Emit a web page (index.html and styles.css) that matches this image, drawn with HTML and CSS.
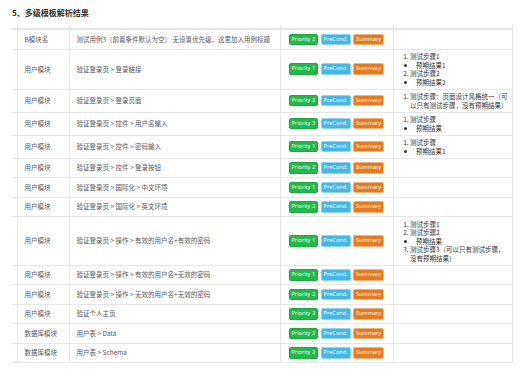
FILE: index.html
```html
<!DOCTYPE html>
<html lang="zh-CN">
<head>
  <meta charset="UTF-8">
  <title>多级模板解析结果</title>
  <link rel="stylesheet" href="styles.css">
</head>
<body>
  <div class="page">
    <h3 class="title">5、多级模板解析结果</h3>
    <table class="result">
      <colgroup>
        <col class="c-gap">
        <col class="c-module">
        <col class="c-case">
        <col class="c-tags">
        <col class="c-steps">
      </colgroup>
      <tr class="cut"><td></td><td></td><td></td><td></td><td></td></tr>
      <tr>
        <td></td>
        <td>B模块名</td>
        <td>测试用例3（前置条件默认为空） 无设置优先级，这里加入用例标题</td>
        <td><div class="tags"><span class="badge p">Priority 2</span><span class="badge c">PreCond.</span><span class="badge s">Summary</span></div></td>
        <td></td>
      </tr>
      <tr>
        <td></td>
        <td>用户模块</td>
        <td>验证登录页 &gt; 登录链接</td>
        <td><div class="tags"><span class="badge p">Priority 1</span><span class="badge c">PreCond.</span><span class="badge s">Summary</span></div></td>
        <td class="steps">
          <ol>
            <li>测试步骤1<ul><li>预期结果1</li></ul></li>
            <li>测试步骤2<ul><li>预期结果2</li></ul></li>
          </ol>
        </td>
      </tr>
      <tr>
        <td></td>
        <td>用户模块</td>
        <td>验证登录页 &gt; 登录页面</td>
        <td><div class="tags"><span class="badge p">Priority 2</span><span class="badge c">PreCond.</span><span class="badge s">Summary</span></div></td>
        <td class="steps">
          <ol>
            <li>测试步骤：页面设计风格统一（可以只有测试步骤，没有预期结果）</li>
          </ol>
        </td>
      </tr>
      <tr>
        <td></td>
        <td>用户模块</td>
        <td>验证登录页 &gt; 控件 &gt; 用户名输入</td>
        <td><div class="tags"><span class="badge p">Priority 3</span><span class="badge c">PreCond.</span><span class="badge s">Summary</span></div></td>
        <td class="steps">
          <ol>
            <li>测试步骤<ul><li>预期结果</li></ul></li>
          </ol>
        </td>
      </tr>
      <tr>
        <td></td>
        <td>用户模块</td>
        <td>验证登录页 &gt; 控件 &gt; 密码输入</td>
        <td><div class="tags"><span class="badge p">Priority 1</span><span class="badge c">PreCond.</span><span class="badge s">Summary</span></div></td>
        <td class="steps">
          <ol>
            <li>测试步骤<ul><li>预期结果1</li></ul></li>
          </ol>
        </td>
      </tr>
      <tr>
        <td></td>
        <td>用户模块</td>
        <td>验证登录页 &gt; 控件 &gt; 登录按钮</td>
        <td><div class="tags"><span class="badge p">Priority 2</span><span class="badge c">PreCond.</span><span class="badge s">Summary</span></div></td>
        <td></td>
      </tr>
      <tr>
        <td></td>
        <td>用户模块</td>
        <td>验证登录页 &gt; 国际化 &gt; 中文环境</td>
        <td><div class="tags"><span class="badge p">Priority 1</span><span class="badge c">PreCond.</span><span class="badge s">Summary</span></div></td>
        <td></td>
      </tr>
      <tr>
        <td></td>
        <td>用户模块</td>
        <td>验证登录页 &gt; 国际化 &gt; 英文环境</td>
        <td><div class="tags"><span class="badge p">Priority 2</span><span class="badge c">PreCond.</span><span class="badge s">Summary</span></div></td>
        <td></td>
      </tr>
      <tr>
        <td></td>
        <td>用户模块</td>
        <td>验证登录页 &gt; 操作 &gt; 有效的用户名+有效的密码</td>
        <td><div class="tags"><span class="badge p">Priority 1</span><span class="badge c">PreCond.</span><span class="badge s">Summary</span></div></td>
        <td class="steps">
          <ol>
            <li>测试步骤1</li>
            <li>测试步骤2<ul><li>预期结果</li></ul></li>
            <li>测试步骤3（可以只有测试步骤，没有预期结果）</li>
          </ol>
        </td>
      </tr>
      <tr>
        <td></td>
        <td>用户模块</td>
        <td>验证登录页 &gt; 操作 &gt; 有效的用户名+无效的密码</td>
        <td><div class="tags"><span class="badge p">Priority 1</span><span class="badge c">PreCond.</span><span class="badge s">Summary</span></div></td>
        <td></td>
      </tr>
      <tr>
        <td></td>
        <td>用户模块</td>
        <td>验证登录页 &gt; 操作 &gt; 无效的用户名+无效的密码</td>
        <td><div class="tags"><span class="badge p">Priority 2</span><span class="badge c">PreCond.</span><span class="badge s">Summary</span></div></td>
        <td></td>
      </tr>
      <tr>
        <td></td>
        <td>用户模块</td>
        <td>验证个人主页</td>
        <td><div class="tags"><span class="badge p">Priority 2</span><span class="badge c">PreCond.</span><span class="badge s">Summary</span></div></td>
        <td></td>
      </tr>
      <tr>
        <td></td>
        <td>数据库模块</td>
        <td>用户表 &gt; Data</td>
        <td><div class="tags"><span class="badge p">Priority 2</span><span class="badge c">PreCond.</span><span class="badge s">Summary</span></div></td>
        <td></td>
      </tr>
      <tr>
        <td></td>
        <td>数据库模块</td>
        <td>用户表 &gt; Schema</td>
        <td><div class="tags"><span class="badge p">Priority 2</span><span class="badge c">PreCond.</span><span class="badge s">Summary</span></div></td>
        <td></td>
      </tr>
    </table>
  </div>
</body>
</html>
```

FILE: styles.css
```css
body {
  margin: 0;
  background-color: #fff;
  font-family: "Noto Sans CJK SC", "Noto Sans", sans-serif;
  color: #555;
}
.page {
  padding: 8px 12px;
}
.title {
  margin: 0;
  font-size: 8px;
  line-height: 10px;
  font-weight: bold;
  color: #333;
}
.result {
  margin-top: 7px;
  width: 500px;
  table-layout: fixed;
  border-collapse: collapse;
  font-size: 6.5px;
  line-height: 9px;
}
.c-gap { width: 5px; }
.c-module { width: 52px; }
.c-case { width: 211px; }
.c-tags { width: 113px; }
.c-steps { width: 119px; }

.result td {
  border: 1px solid #e6e6e6;
  padding: 3.5px 7px;
  vertical-align: middle;
  white-space: nowrap;
  overflow: hidden;
}
.result td:first-child {
  border-left: none;
  padding: 0;
}
.result tr.cut td {
  height: 3px;
  padding: 0;
  border-top: none;
  border-bottom: 2px solid #e6e6e6;
}
.tags {
  display: flex;
  gap: 2.5px;
  padding-left: 1px;
}
.badge {
  display: inline-block;
  font-family: "Open Sans", sans-serif;
  font-size: 5.6px;
  line-height: 7.5px;
  padding: 1px 2px;
  border-radius: 2px;
  color: #fff;
}
.badge.p {
  background-color: #22b94a;
  border: 0.5px solid #1ea843;
}
.badge.c {
  background-color: #42b8e2;
  border: 0.5px solid #8fd3ee;
}
.badge.s {
  background-color: #e57b1e;
  border: 0.5px solid #f0b27a;
}
.result td.steps {
  white-space: normal;
  padding: 2.5px 3px 2.5px 7px;
  color: #333;
  line-height: 8.5px;
}
.steps ol {
  margin: 0;
  padding-left: 9.5px;
}
.steps ul {
  margin: 0;
  padding-left: 6px;
  list-style-type: disc;
}
```
